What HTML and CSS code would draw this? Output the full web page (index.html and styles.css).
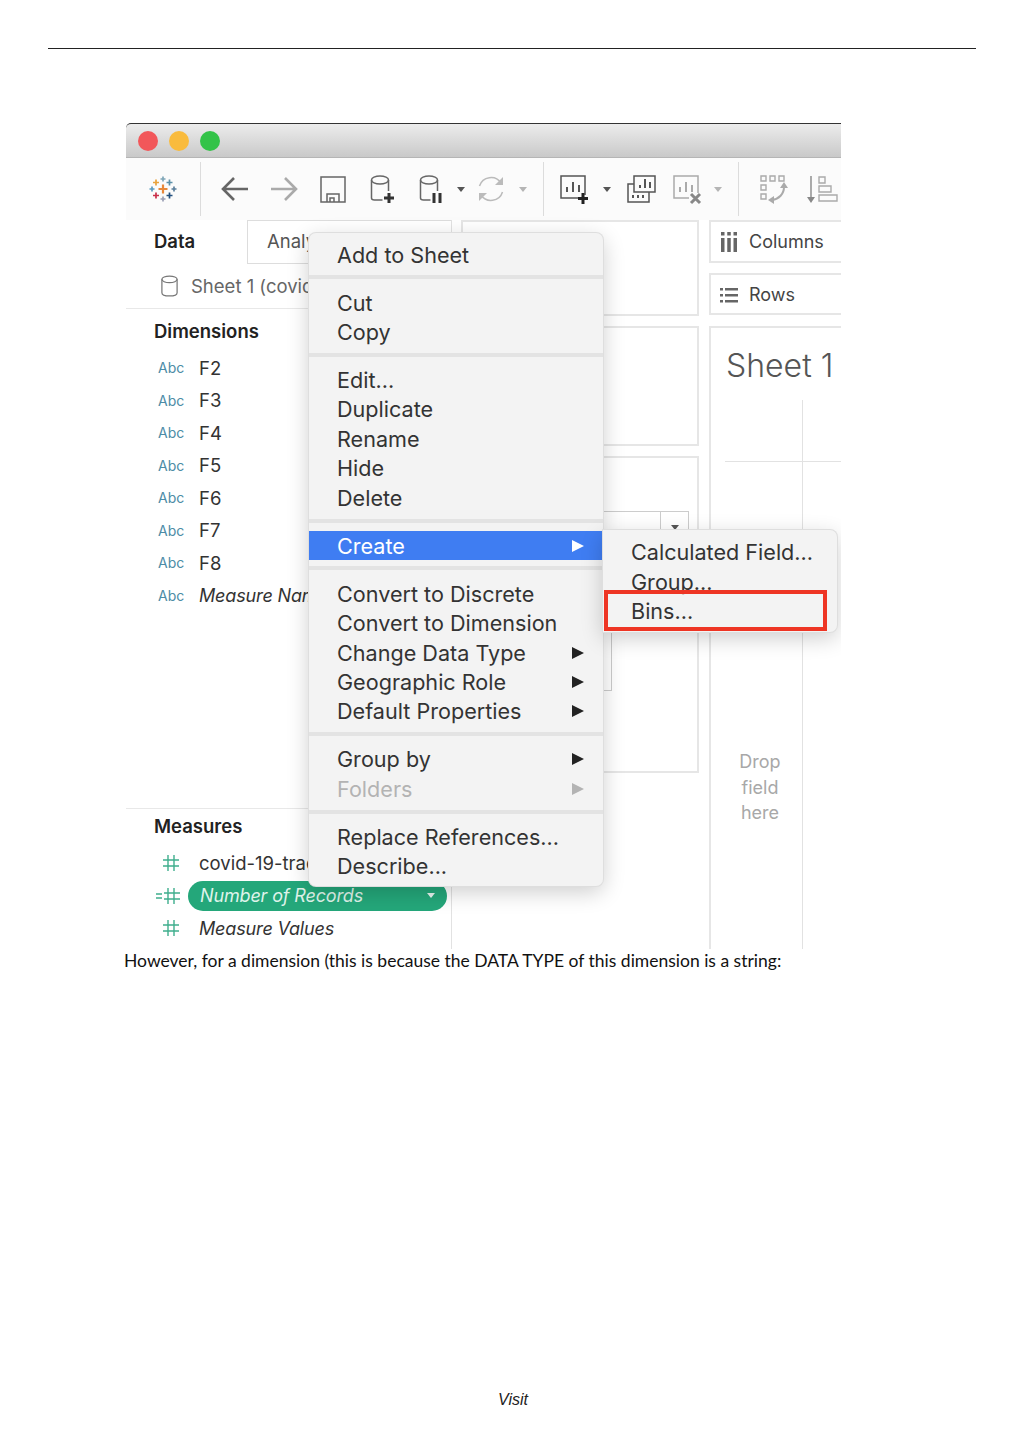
FILE: index.html
```html
<!DOCTYPE html>
<html lang="en">
<head>
<meta charset="utf-8">
<title>Tableau create bins</title>
<link rel="stylesheet" href="styles.css">
</head>
<body>
<div class="page">
  <div class="rule"></div>
  <div class="figure">
    <div class="titlebar">
      <span class="light red"></span><span class="light amber"></span><span class="light green"></span>
    </div>
    <div class="toolbar">
      <div class="logo-slot">
        <svg class="ic" viewBox="0 0 32 32" fill="none" stroke-width="1.7">
          <path stroke="#e8883a" stroke-width="2.2" d="M16 11.5v9M11.5 16h9"/>
          <path stroke="#7fa6b8" d="M16 3.5v5M13.5 6h5"/>
          <path stroke="#e9a23b" d="M9 6.5v6M6 9.500h6"/>
          <path stroke="#5b8fa8" d="M22.500 6.500v6M19.500 9.500h6"/>
          <path stroke="#5c9cc0" d="M5 13.500v5M2.500 16h5"/>
          <path stroke="#5b7f9c" d="M27 13.500v5M24.500 16h5"/>
          <path stroke="#c9304a" d="M9 19.500v6M6 22.500h6"/>
          <path stroke="#23507f" d="M22.500 19.500v6M19.500 22.500h6"/>
          <path stroke="#9a9fb5" d="M16 23.500v5M13.500 26h5"/>
        </svg>
      </div>
      <div class="tool-sep"></div>
      <div class="t49"><svg class="ic" viewBox="0 0 32 32" fill="none" stroke="#666" stroke-width="2.600"><path d="M29 16H5M15 5 4 16l11 11"/></svg></div>
      <div class="t49"><svg class="ic" viewBox="0 0 32 32" fill="none" stroke="#aaa" stroke-width="2.600"><path d="M3 16h24M17 5l11 11-11 11"/></svg></div>
      <div class="t49"><svg class="ic" viewBox="0 0 32 32" fill="none" stroke="#666" stroke-width="1.500"><path d="M4 4h24v25H4zM10 29v-8h12v8M13 29v-4h4v4"/></svg></div>
      <div class="t49"><svg class="ic" viewBox="0 0 32 32" fill="none" stroke="#666" stroke-width="1.500"><ellipse cx="14" cy="7" rx="8.500" ry="4"/><path d="M5.500 7v18q0 2 3 2h8M22.500 7v11"/><path stroke="#333" stroke-width="3" d="M23 20v10M18 25h10"/></svg></div>
      <div class="t49"><svg class="ic" viewBox="0 0 32 32" fill="none" stroke="#666" stroke-width="1.500"><ellipse cx="14" cy="7" rx="8.500" ry="4"/><path d="M5.500 7v18q0 2 3 2h7M22.500 7v11"/><path stroke="#333" stroke-width="3" d="M19 20v10M25 20v10"/></svg></div>
      <div class="t11"><span class="caret dark"></span></div>
      <div class="t49"><svg class="ic" viewBox="0 0 32 32" fill="none" stroke="#bbb" stroke-width="1.500"><path d="M4.500 13A12 12 0 0 1 26 10M27.500 19A12 12 0 0 1 6 22"/><path fill="#bbb" stroke="none" d="M28 4v8h-8zM4 28v-8h8z"/></svg></div>
      <div class="t15"><span class="caret"></span></div>
      <div class="tool-sep second"></div>
      <div class="t49"><svg class="ic" viewBox="0 0 32 32" fill="none" stroke="#555" stroke-width="1.500"><path d="M26 22V3H2v22h17"/><path stroke-width="2" d="M8 19v-5M14 19V9M20 19v-7"/><path stroke="#222" stroke-width="3" d="M24 20v11M19 25.500h10"/></svg></div>
      <div class="t15"><span class="caret dark"></span></div>
      <div class="t53"><svg class="ic" viewBox="0 0 32 32" fill="none" stroke="#555" stroke-width="1.500"><path d="M9 3h21v16H9zM9 11H3v18h21v-10"/><path stroke-width="2" d="M15 15v-3M20 15V6M25 15v-6M8 25v-3M13 25v-3M18 25v-3"/></svg></div>
      <div class="t41"><svg class="ic" viewBox="0 0 32 32" fill="none" stroke="#aaa" stroke-width="1.500"><path d="M26 20V3H2v22h15"/><path stroke-width="2" d="M8 19v-5M14 19V9M20 19v-7"/><path stroke="#888" stroke-width="3" d="M19 21l9 9M28 21l-9 9"/></svg></div>
      <div class="t20"><span class="caret"></span></div>
      <div class="tool-sep third"></div>
      <div class="t49"><svg class="ic" viewBox="0 0 32 32" fill="none" stroke="#aaa" stroke-width="1.400"><path d="M3 3h5v5H3zM12 3h5v5h-5zM21 3h5v5h-5zM3 12h5v5H3zM3 21h5v5H3z"/><path stroke-width="2" d="M26 14c0 7-5 12-12 13"/><path fill="#aaa" stroke="none" d="m26 9 4 6h-8zM10 27l6-4v8z"/></svg></div>
      <div class="t49"><svg class="ic" viewBox="0 0 32 32" fill="none" stroke="#aaa" stroke-width="1.400"><path d="M12 4h6v6h-6zM12 13h12v6H12zM12 22h18v6H12z"/><path stroke="#888" d="M4 3v23"/><path fill="#888" stroke="none" d="m0 24 8 0-4 6z"/></svg></div>
    </div>
    <div class="workspace">
      <aside class="data-pane">
        <div class="tabs">
          <div class="tab active">Data</div>
          <div class="tab inactive"><span>Analysis</span></div>
        </div>
        <div class="source">
          <svg class="db" viewBox="0 0 20 24" fill="none" stroke="#777" stroke-width="1.300"><ellipse cx="10" cy="5" rx="8" ry="3.500"/><path d="M2 5v14c0 2 3.500 3.500 8 3.500s8-1.500 8-3.500V5"/></svg>
          <span>Sheet 1 (covid</span>
        </div>
        <div class="section-title dims">Dimensions</div>
        <div class="field"><span class="abc">Abc</span><span>F2</span></div>
        <div class="field"><span class="abc">Abc</span><span>F3</span></div>
        <div class="field"><span class="abc">Abc</span><span>F4</span></div>
        <div class="field"><span class="abc">Abc</span><span>F5</span></div>
        <div class="field"><span class="abc">Abc</span><span>F6</span></div>
        <div class="field"><span class="abc">Abc</span><span>F7</span></div>
        <div class="field"><span class="abc">Abc</span><span>F8</span></div>
        <div class="field"><span class="abc">Abc</span><em>Measure Names</em></div>
        <div class="measures">
          <div class="section-title meas">Measures</div>
          <div class="field">
            <span class="hash"><svg class="hash-ic" viewBox="0 0 16 16" fill="none" stroke="#3fae8d" stroke-width="1.400"><path d="M5 0v16M11 0v16M0 5h16M0 11h16"/></svg></span>
            <span>covid-19-track</span>
          </div>
          <div class="field pill-row">
            <span class="hash calc"><svg class="calc-ic" viewBox="0 0 24 16" fill="none" stroke="#3fae8d" stroke-width="1.400"><path d="M12 0v16M18 0v16M8 5h16M8 11h16"/><path stroke-width="1.600" d="M0 6h6M0 10h6"/></svg></span>
            <div class="pill"><em>Number of Records</em><span class="caret white"></span></div>
          </div>
          <div class="field">
            <span class="hash"><svg class="hash-ic" viewBox="0 0 16 16" fill="none" stroke="#3fae8d" stroke-width="1.400"><path d="M5 0v16M11 0v16M0 5h16M0 11h16"/></svg></span>
            <em>Measure Values</em>
          </div>
        </div>
      </aside>
      <section class="cards">
        <div class="card pages"></div>
        <div class="card filters"></div>
        <div class="card marks">
          <div class="mark-select"><span class="select-btn"><span class="caret dark"></span></span></div>
          <div class="mark-grid"></div>
        </div>
      </section>
      <section class="view">
        <div class="shelf first">
          <svg class="shelf-ic tall" viewBox="0 0 18 20" fill="#666"><path d="M1 0h3.500v3.500H1zM7.250 0h3.500v3.500h-3.500zM13.500 0h3.500v3.500h-3.500zM1 6h3.500v14H1zM7.250 6h3.500v14h-3.500zM13.500 6h3.500v14h-3.500z"/></svg>
          <span>Columns</span>
        </div>
        <div class="shelf second">
          <svg class="shelf-ic" viewBox="0 0 18 18" fill="#666"><path d="M0 2h3v2.400H0zM5 2h13v2.400H5zM0 8h3v2.400H0zM5 8h13v2.400H5zM0 14h3v2.400H0zM5 14h13v2.400H5z"/></svg>
          <span>Rows</span>
        </div>
        <div class="canvas">
          <h1>Sheet 1</h1>
          <div class="chart">
            <div class="h-axis"></div>
            <div class="drop">Drop<br>field<br>here</div>
          </div>
        </div>
      </section>
    </div>

    <div class="menu main-menu">
      <div class="row">Add to Sheet</div>
      <div class="sep"></div>
      <div class="row">Cut</div>
      <div class="row">Copy</div>
      <div class="sep"></div>
      <div class="row">Edit...</div>
      <div class="row">Duplicate</div>
      <div class="row">Rename</div>
      <div class="row">Hide</div>
      <div class="row">Delete</div>
      <div class="sep"></div>
      <div class="row selected">Create<span class="arrow"></span></div>
      <div class="sep"></div>
      <div class="row">Convert to Discrete</div>
      <div class="row">Convert to Dimension</div>
      <div class="row">Change Data Type<span class="arrow"></span></div>
      <div class="row">Geographic Role<span class="arrow"></span></div>
      <div class="row">Default Properties<span class="arrow"></span></div>
      <div class="sep"></div>
      <div class="row">Group by<span class="arrow"></span></div>
      <div class="row disabled">Folders<span class="arrow"></span></div>
      <div class="sep"></div>
      <div class="row">Replace References...</div>
      <div class="row">Describe...</div>
    </div>
    <div class="menu sub-menu">
      <div class="row">Calculated Field...</div>
      <div class="row">Group...</div>
      <div class="row">Bins...</div>
    </div>
    <div class="highlight-box"></div>
  </div>
  <p class="caption">However, for a dimension (this is because the DATA TYPE of this dimension is a string:</p>
  <footer class="footer">Visit</footer>
</div>
</body>
</html>
```
FILE: styles.css
```css
* { box-sizing: border-box; }
html, body { margin: 0; padding: 0; background: #fff; }
.page {
  height: 1448px;
  display: flex;
  flex-direction: column;
  padding-top: 48px;
  overflow: hidden;
  font-family: Inter, "Liberation Sans", sans-serif;
}
.rule { height: 1px; margin: 0 48px; background: #222; flex: none; }

.figure {
  position: relative;
  flex: none;
  width: 715px;
  height: 826px;
  margin: 74px 0 0 126px;
  overflow: hidden;
  display: flex;
  flex-direction: column;
  color: #333;
  background: #fff;
}
.titlebar {
  flex: none;
  height: 35px;
  display: flex;
  align-items: center;
  gap: 11px;
  padding: 1px 0 0 12px;
  border-top: 1px solid #333;
  border-bottom: 1px solid #b5b5b5;
  border-top-left-radius: 5px;
  background: linear-gradient(#ececec, #c9c9c9);
}
.light { width: 20px; height: 20px; border-radius: 50%; }
.light.red { background: #f2575a; }
.light.amber { background: #f9bb3d; }
.light.green { background: #33c348; }

.toolbar {
  flex: none;
  height: 62px;
  display: flex;
  align-items: center;
  background: #fbfbfb;
}
.ic { width: 32px; height: 32px; display: block; flex: none; }
.logo-slot { width: 74px; flex: none; display: flex; justify-content: center; }
.tool-sep { width: 1px; height: 54px; background: #dcdcdc; margin-right: 9px; flex: none; }
.tool-sep.second { margin-left: 13px; margin-right: 6px; }
.tool-sep.third { margin-left: 10px; margin-right: 10px; }
.t49, .t53, .t41, .t15, .t11, .t20 { display: flex; justify-content: center; align-items: center; flex: none; }
.t49 { width: 49px; }
.t53 { width: 53px; }
.t41 { width: 41px; }
.t20 { width: 20px; }
.t15 { width: 15px; }
.t11 { width: 11px; }
.caret {
  width: 0; height: 0;
  border-left: 4.500px solid transparent;
  border-right: 4.500px solid transparent;
  border-top: 5px solid #b5b5b5;
}
.caret.dark { border-top-color: #555; }
.caret.white { border-top-color: #e8f5f0; }

.workspace { flex: 1; min-height: 0; display: flex; }

.data-pane {
  flex: none;
  width: 326px;
  display: flex;
  flex-direction: column;
  border-right: 1px solid #e2e2e2;
  font-size: 18.500px;
}
.tabs { flex: none; height: 44px; display: flex; }
.tab { display: flex; align-items: center; padding-bottom: 3px; }
.tab.active { width: 121px; padding-left: 28px; font-weight: 600; font-size: 18.500px; color: #222; }
.tab.inactive { flex: 1; padding-left: 19px; color: #555; border: 1px solid #ddd; border-right: 0; overflow: hidden; }
.source {
  flex: none;
  height: 45px;
  display: flex;
  align-items: center;
  padding: 0 0 1px 34px;
  gap: 12px;
  color: #666;
  border-bottom: 1px solid #e8e8e8;
  white-space: nowrap;
}
.db { width: 19px; height: 24px; flex: none; }
.section-title { font-weight: 600; font-size: 18.500px; padding-left: 28px; color: #222; display: flex; align-items: center; }
.section-title.dims { height: 42.500px; padding-top: 2px; }
.section-title.meas { height: 38px; padding-bottom: 4px; }
.field {
  flex: none;
  height: 32.500px;
  display: flex;
  align-items: center;
  white-space: nowrap;
  padding-left: 32px;
  color: #333;
}
.field em { font-style: italic; font-size: 18px; letter-spacing: -.15px; }
.abc { width: 41px; font-size: 14px; color: #4c8ca6; flex: none; }
.hash { width: 41px; padding-left: 5px; flex: none; display: flex; }
.hash-ic { width: 16px; height: 16px; display: block; }
.calc-ic { width: 24px; height: 16px; display: block; }
.hash.calc { padding-left: 0; margin-left: -2px; width: 32px; }
.measures { margin-top: auto; height: 141px; border-top: 1px solid #e8e8e8; }
.pill-row { padding-right: 4px; }
.pill {
  flex: 1;
  height: 30px;
  border-radius: 15px;
  padding: 0 12px;
  background: #24a77a;
  color: #dff3ea;
  display: flex;
  align-items: center;
  justify-content: space-between;
}

.cards { flex: none; width: 247px; padding: 0 0 0 9px; display: flex; flex-direction: column; gap: 10px; }
.card { border: 2px solid #e6e6e6; }
.card.pages { height: 96px; }
.card.filters { height: 120px; }
.card.marks { height: 317px; padding-top: 53px; display: flex; flex-direction: column; }
.mark-select { height: 60px; margin-left: 40px; border: 1px solid #ccc; border-bottom: 0; display: flex; justify-content: flex-end; margin-right: 8px; }
.select-btn { width: 28px; height: 100%; border-left: 1px solid #ccc; display: flex; justify-content: center; padding-top: 13px; }
.mark-grid { height: 120px; width: 149px; border: 1px solid #ccc; border-top: 0; }

.view { flex: 1; min-width: 0; padding-left: 10px; display: flex; flex-direction: column; }
.shelf {
  flex: none;
  height: 43px;
  margin-bottom: 10px;
  display: flex;
  align-items: center;
  gap: 11px;
  padding-left: 9px;
  border: 2px solid #e6e6e6;
  border-right: 0;
  font-size: 18px;
  color: #444;
}
.shelf.second { height: 42px; margin-bottom: 11px; padding-top: 1px; }
.shelf-ic { width: 18px; height: 18px; flex: none; }
.shelf-ic.tall { height: 20px; }
.canvas {
  flex: 1;
  min-height: 0;
  display: flex;
  flex-direction: column;
  border-left: 2px solid #e6e6e6;
  border-top: 2px solid #e6e6e6;
}
.canvas h1 { margin: 18px 0 0 15px; font-size: 32px; line-height: 40px; font-weight: 300; color: #555; white-space: nowrap; }
.chart { flex: 1; position: relative; margin-top: 14px; margin-left: 91px; border-left: 1px solid #e2e2e2; }
.h-axis { height: 1px; margin: 61px 0 0 -78px; background: #e2e2e2; }
.drop {
  position: absolute;
  left: -91px;
  width: 96px;
  top: 349px;
  text-align: center;
  font-size: 18px;
  line-height: 25.500px;
  color: #a8a8a8;
}

.menu {
  position: absolute;
  background: #f3f3f3;
  border-radius: 7px;
  box-shadow: 0 0 0 1px #dedede, 0 6px 22px rgba(0, 0, 0, .2);
  font-size: 21.600px;
  color: #333;
  white-space: nowrap;
}
.main-menu { left: 183px; top: 110px; width: 294px; height: 653px; padding-top: 7px; }
.sub-menu { left: 477px; top: 407px; width: 234px; height: 102px; padding-top: 7.500px; border-radius: 0 7px 7px 0; }
.row {
  height: 29.450px;
  display: flex;
  align-items: center;
  justify-content: space-between;
  padding: 0 19px 0 28px;
}
.row.selected { background: #3f7df2; color: #fff; }
.row.disabled { color: #b3b3b3; }
.sep { height: 4px; margin: 6px 0 8.500px; background: #e3e3e3; }
.arrow {
  width: 0; height: 0;
  border-top: 6px solid transparent;
  border-bottom: 6px solid transparent;
  border-left: 12px solid #222;
}
.row.selected .arrow { border-left-color: #fff; }
.row.disabled .arrow { border-left-color: #b3b3b3; }
.highlight-box {
  position: absolute;
  left: 478px;
  top: 467px;
  width: 223px;
  height: 41px;
  border: 4px solid #ee3524;
}

.caption {
  flex: none;
  margin: 0;
  padding-left: 124px;
  font-family: Lato, "Open Sans", sans-serif;
  font-size: 17.500px;
  line-height: 24px;
  color: #111;
  white-space: nowrap;
}
.footer {
  margin-top: auto;
  padding: 0 0 38px 498px;
  font-family: "Liberation Sans", sans-serif;
  font-style: italic;
  font-size: 16px;
  line-height: 20px;
  color: #222;
}
```
